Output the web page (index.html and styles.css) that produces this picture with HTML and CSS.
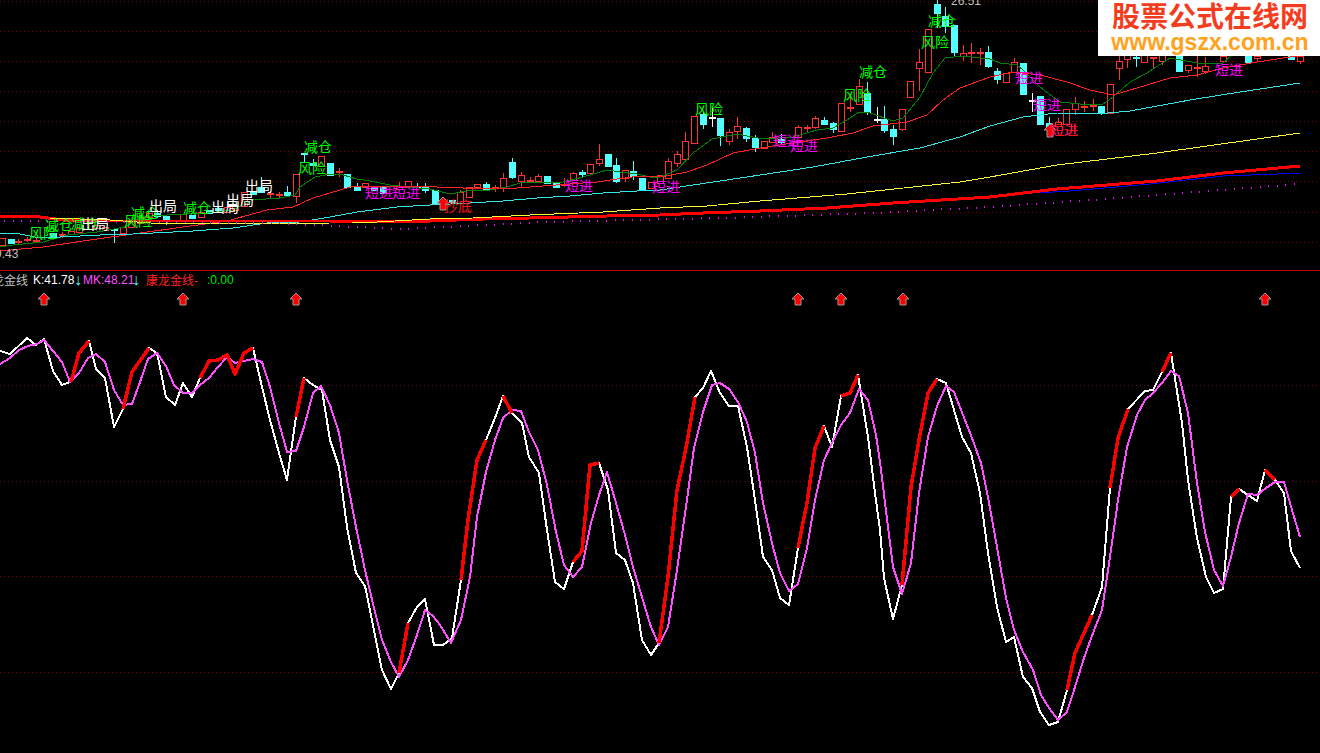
FILE: index.html
```html
<!DOCTYPE html>
<html lang="zh-CN">
<head>
    <meta charset="UTF-8">
    <title>股票公式在线网</title>
    <link rel="stylesheet" href="styles.css">
</head>
<body>
    <div class="terminal">
        <div class="main-panel">
            <svg class="chart" viewBox="0 0 1320 270" width="1320" height="270">
                <g id="main-grid"></g>
                <g id="candles"></g>
                <g id="main-lines"></g>

                <!-- signal arrows -->
                <polygon class="arrow" points="443,197 449,203 446,203 446,210 440,210 440,203 437,203"/>
                <polygon class="arrow" points="1050,124 1056,130 1053,130 1053,137 1047,137 1047,130 1044,130"/>

                <!-- signal labels -->
                <text class="label risk" x="29" y="238">风险</text>
                <text class="label risk" x="45" y="230">减仓</text>
                <text class="label risk" x="71" y="229">减仓</text>
                <text class="label exit" x="81" y="229">出局</text>
                <text class="label risk" x="124" y="226">风险</text>
                <text class="label risk" x="131" y="218">减仓</text>
                <text class="label exit" x="149" y="211">出局</text>
                <text class="label risk" x="183" y="213">减仓</text>
                <text class="label exit" x="211" y="212">出局</text>
                <text class="label exit" x="226" y="205">出局</text>
                <text class="label exit" x="245" y="191">出局</text>
                <text class="label risk" x="298" y="173">风险</text>
                <text class="label risk" x="304" y="152">减仓</text>
                <text class="label buy" x="365" y="198">短进</text>
                <text class="label buy" x="392" y="198">短进</text>
                <text class="label bottom" x="444" y="211">抄底</text>
                <text class="label buy" x="565" y="191">短进</text>
                <text class="label buy" x="652" y="192">短进</text>
                <text class="label risk" x="695" y="114">风险</text>
                <text class="label buy" x="773" y="146">短进</text>
                <text class="label buy" x="790" y="151">短进</text>
                <text class="label risk" x="843" y="100">风险</text>
                <text class="label risk" x="859" y="77">减仓</text>
                <text class="label risk" x="921" y="47">风险</text>
                <text class="label risk" x="928" y="26">减仓</text>
                <text class="label buy" x="1015" y="83">短进</text>
                <text class="label buy" x="1033" y="110">短进</text>
                <text class="label buy" x="1050" y="135">短进</text>
                <text class="label bottom" x="1050" y="135">短进</text>
                <text class="label buy" x="1215" y="75">短进</text>

                <text class="axis-value" x="-5" y="258">9.43</text>
                <text class="axis-value" x="951" y="5">26.51</text>
            </svg>
            <div class="logo">
                <div class="logo-title">股票公式在线网</div>
                <div class="logo-url">www.gszx.com.cn</div>
            </div>
        </div>

        <div class="sub-panel">
            <div class="legend">
                <span class="legend-name">龙金线</span>
                <span class="legend-k">K:41.78</span>
                <span class="legend-down">↓</span>
                <span class="legend-mk">MK:48.21</span>
                <span class="legend-down">↓</span>
                <span class="legend-gold">康龙金线-</span>
                <span class="legend-zero">:0.00</span>
            </div>
            <svg class="chart" viewBox="0 288 1320 465" width="1320" height="465">
                <g id="sub-grid"></g>
                <g id="sub-arrows"></g>
                <g id="sub-lines"></g>
            </svg>
        </div>
    </div>
    <script src="chart.js"></script>
</body>
</html>
```

FILE: styles.css
```css
body {
    margin: 0;
    background: #000;
    overflow: hidden;
    font-family: "Liberation Sans", "Noto Sans CJK SC", sans-serif;
}

.terminal {
    width: 1320px;
    height: 753px;
    display: flex;
    flex-direction: column;
}

.main-panel {
    position: relative;
    height: 270px;
    border-bottom: 1px solid #c80000;
}

.sub-panel {
    flex-grow: 1;
    display: flex;
    flex-direction: column;
    overflow: hidden;
}

.chart {
    display: block;
}

/* logo sits over the top right corner of the chart */
.logo {
    position: absolute;
    top: 0;
    right: 0;
    width: 220px;
    height: 56px;
    padding-left: 2px;
    background: #fff;
    display: flex;
    flex-direction: column;
    align-items: center;
}

.logo-title {
    font-family: "Noto Sans CJK SC", sans-serif;
    font-size: 28px;
    font-weight: 700;
    line-height: 31px;
    color: #f43d1e;
}

.logo-url {
    font-family: "Liberation Sans", sans-serif;
    font-size: 23px;
    font-weight: 700;
    line-height: 22px;
    color: #ffa21c;
}

.legend {
    height: 17px;
    display: flex;
    align-items: center;
    font-size: 12px;
    white-space: nowrap;
    margin-left: -8px;
}

.legend-name {
    color: #c0c0c0;
    width: 41px;
}

.legend-k {
    color: #fff;
    width: 42px;
}

.legend-down {
    color: #54ffff;
    font-size: 16px;
    line-height: 14px;
    width: 8px;
    margin-left: -1px;
    margin-right: 1px;
}

.legend-mk {
    color: #ff50ff;
    width: 50px;
}

.legend-gold {
    color: #ff2020;
    margin-left: 5px;
    width: 61px;
}

.legend-zero {
    color: #00e600;
}

/* svg parts */
.grid {
    stroke: #780000;
    stroke-width: 1;
    stroke-dasharray: 1 3;
}

.up {
    fill: #000;
    stroke: #ff3232;
    stroke-width: 1;
    shape-rendering: crispEdges;
}

.down {
    fill: #54ffff;
    stroke: #54ffff;
    stroke-width: 1;
    shape-rendering: crispEdges;
}

.doji {
    fill: #000;
    stroke: #fff;
    stroke-width: 1;
    shape-rendering: crispEdges;
}

.line {
    fill: none;
    shape-rendering: crispEdges;
    stroke-linejoin: round;
}

.ma5 { stroke: #008000; stroke-width: 1; }
.ma10 { stroke: #ff2020; stroke-width: 1; }
.ma20 { stroke: #33e6e6; stroke-width: 1; }
.ma60 { stroke: #ffff33; stroke-width: 1; }
.ma120 { stroke: #ff0000; stroke-width: 3; }
.ma250 { stroke: #0000ff; stroke-width: 1; }

.dot {
    fill: #ff00ff;
}

.k-line { stroke: #fff; stroke-width: 2; }
.mk-line { stroke: #ff50ff; stroke-width: 2; }
.gold-line { stroke: #ff0000; stroke-width: 3.5; }

.arrow {
    fill: #ff0000;
    stroke: #9a9a9a;
    stroke-width: 1;
}

.label {
    font-family: "Noto Sans CJK SC", sans-serif;
    font-size: 14px;
}

.risk { fill: #00ff00; }
.exit { fill: #fff; }
.buy { fill: #ff00ff; }
.bottom { fill: #ff1414; }

.axis-value {
    font-family: "Liberation Sans", sans-serif;
    font-size: 12px;
    fill: #c0c0c0;
}
```

FILE: chart.js
```js
const SVG_NS = 'http://www.w3.org/2000/svg';

function add(parent, tag, attrs) {
    const el = document.createElementNS(SVG_NS, tag);
    for (const key in attrs) el.setAttribute(key, attrs[key]);
    parent.appendChild(el);
    return el;
}

function drawGrid(id, rows, endX) {
    const group = document.getElementById(id);
    rows.forEach(y => add(group, 'line', { class: 'grid', x1: 0, x2: endX, y1: y + 0.5, y2: y + 0.5 }));
}

// candle: [x, bodyTop, bodyBottom, high, low]
const upCandles = [
    [2,238,245],[18,241,242,239,245],[27,239,240,237,242],[36,240,241,238,243],[62,234,235,232,238],
    [71,231,234],[79,228,232],[97,225,228],[105,227,230],[123,227,233],[131,222,227],[140,217,223],
    [149,213,217],[175,220,221],[183,214,220],[201,212,217],[227,207,212],[235,205,210],[244,192,206],
    [270,193,194,191,198],[279,194,195,192,199],[296,174,196,174,203],[321,156,166],[339,171,172,168,177],
    [365,183,187],[399,186,189,182,190],[408,181,187],[460,192,203,190,204],[469,187,197],[477,184,187],
    [495,187,188,185,192],[503,178,188,173,192],[521,175,181,172,187],[530,180,181,177,182],
    [538,176,181,174,183],[564,184,185,178,187],[573,173,180,172,181],[590,164,173],[599,159,163,144,166],
    [625,170,178,170,182],[651,182,188],[660,175,183],[668,161,178,158,179],[677,154,163,151,167],
    [685,141,159,132,159],[694,116,143],[729,132,141,129,145],[737,126,131,117,139],[764,141,148],
    [772,137,142,132,143],[798,127,137,125,138],[807,127,128,125,133],[815,118,127,116,129],[841,103,131],
    [850,107,108,94,112],[859,86,104,79,105],[902,109,129,109,131],[910,81,97],[919,62,68,49,91],[928,29,72],
    [963,53,56,45,61],[971,52,53,43,63],[980,52,53,48,65],[1006,73,82,73,83],[1014,62,72,58,72],
    [1058,122,126,118,127],[1066,109,124],[1075,103,109,97,115],[1084,106,107,101,112],[1093,105,106,99,111],
    [1110,84,113],[1119,61,68,56,80],[1127,55,59,55,68],[1144,55,62],[1153,57,58,57,68],[1162,55,61,55,65],
    [1188,65,70,65,73],[1197,67,68,56,77],[1205,66,71,57,74],[1223,56,61],[1257,56,58,56,62],[1300,55,61,55,64]
];

const downCandles = [
    [11,239,243],[53,233,237],[114,229,230,228,243],[157,213,216,210,218],[166,216,219,215,225],[192,215,218],
    [209,210,213],[218,208,210,207,213],[253,192,194],[261,187,192,177,193],[287,192,195,186,196],
    [304,153,154,153,163],[313,163,165,159,165],[330,163,175],[347,174,187],[357,187,190,183,191],
    [374,187,190],[383,187,193],[417,186,187,183,187],[425,187,190,183,193],[435,190,204],[452,200,202],
    [486,184,189,182,189],[512,162,177,158,179],[547,176,183],[556,183,187],[582,172,174,170,177],
    [608,154,166],[616,165,181,158,183],[633,171,176,161,180],[642,178,190],[703,114,124,112,129],
    [720,118,135,118,146],[746,128,138,127,142],[755,138,147,135,152],[781,139,142,134,145],
    [824,120,124,117,124],[833,123,129,122,133],[867,93,112,82,115],[884,119,130,106,133],
    [893,129,136,125,145],[937,4,13,0,28],[945,16,26,7,33],[954,25,52,25,57],[988,52,66,46,68],
    [997,71,79,68,84],[1023,63,94],[1040,96,124],[1049,123,127,117,127],[1101,106,113,106,115],
    [1136,57,58,55,67],[1179,55,71],[1248,55,62],[1291,55,59]
];

const dojis = [[712,117,118,108,127],[877,119,120,107,123],[1032,100,101,93,112]];

function drawCandles(list, className) {
    const group = document.getElementById('candles');
    list.forEach(([x, top, bottom, high = top, low = bottom]) => {
        if (high < top) add(group, 'line', { class: className, x1: x + 0.5, x2: x + 0.5, y1: high, y2: top });
        if (low > bottom) add(group, 'line', { class: className, x1: x + 0.5, x2: x + 0.5, y1: bottom, y2: low });
        add(group, 'rect', { class: className, x: x - 3 + 0.5, y: top + 0.5, width: 6, height: bottom - top });
    });
}

function drawLine(groupId, className, points) {
    add(document.getElementById(groupId), 'polyline', { class: 'line ' + className, points: points });
}

drawGrid('main-grid', [1, 31, 61, 91, 121, 151, 181, 212, 242], 1320);
drawGrid('sub-grid', [385, 481, 576, 672], 1320);

drawCandles(upCandles, 'up');
drawCandles(downCandles, 'down');
drawCandles(dojis, 'doji');

drawLine('main-lines', 'ma5', '0,247 13,245 43,242 68,235 97,232 125,227 140,217 167,215 207,213 233,210 253,200 280,198 295,195 300,187 315,177 330,174 343,175 357,179 370,181 390,185 407,187 430,189 450,194 467,191 490,190 507,187 520,183 543,182 563,182 583,177 607,170 620,172 637,174 650,177 660,177 677,170 693,153 712,139 737,134 763,139 793,137 817,130 833,128 847,120 859,112 870,113 893,121 903,118 920,97 933,73 945,58 963,56 990,59 1000,63 1017,65 1023,70 1040,87 1060,102 1080,104 1103,104 1113,97 1130,82 1147,73 1170,58 1197,63 1223,63 1232,55');
drawLine('main-lines', 'ma10', '0,251 43,247 90,240 133,234 183,227 227,221 267,210 293,207 313,198 330,193 350,187 370,186 397,186 437,187 463,188 487,189 517,188 543,186 570,184 597,182 617,179 640,176 660,177 687,172 707,165 733,153 760,148 793,143 827,138 853,133 873,126 907,122 927,115 943,100 960,88 990,77 1013,72 1040,75 1067,82 1090,90 1113,95 1137,88 1170,78 1197,75 1223,68 1257,62 1290,57 1303,56');
drawLine('main-lines', 'ma20', '0,233 15,233 40,238 100,235 133,234 193,231 233,228 267,223 300,222 330,217 357,212 397,207 430,205 470,203 503,201 537,198 570,196 603,193 637,191 660,190 693,185 747,177 813,167 867,157 920,148 960,137 990,126 1023,117 1057,113 1097,114 1130,111 1190,100 1240,92 1300,83');
drawLine('main-lines', 'ma250', '1037,193 1070,191 1150,184 1223,176 1277,174 1300,173');
drawLine('main-lines', 'ma120', '0,216 40,217 63,220 110,221 330,221 430,221 483,219 530,218 607,216 660,215 703,213 760,211 827,208 893,203 990,197 1057,189 1157,181 1223,173 1300,166');
drawLine('main-lines', 'ma60', '50,218 110,220 150,223 240,224 330,223 352,223 377,222 430,219 473,218 530,215 603,212 660,208 707,206 760,201 847,194 913,187 960,182 990,177 1057,165 1157,153 1250,140 1300,133');

// slow average is only plotted as sparse dots
const dotPath = [[0, 220], [270, 222], [400, 228], [547, 221], [720, 217], [873, 212], [990, 206], [1090, 199], [1300, 183]];
const mainLines = document.getElementById('main-lines');
for (let x = 4; x < 1302; x += 8.6) {
    const next = dotPath.findIndex(p => p[0] >= x);
    const a = dotPath[next - 1], b = dotPath[next];
    const y = a[1] + (b[1] - a[1]) * (x - a[0]) / (b[0] - a[0]);
    add(mainLines, 'rect', { class: 'dot', x: Math.round(x), y: Math.round(y), width: 1, height: 2 });
}

const arrowGroup = document.getElementById('sub-arrows');
[44, 183, 296, 798, 841, 903, 1265].forEach(x => {
    add(arrowGroup, 'polygon', {
        class: 'arrow',
        points: `${x},293 ${x + 6},299 ${x + 3},299 ${x + 3},305 ${x - 3},305 ${x - 3},299 ${x - 6},299`
    });
});

drawLine('sub-lines', 'k-line', '0,351 10,354 27,338 36,345 44,339 53,371 62,385 70,382 79,353 89,341 96,369 105,378 114,427 123,409 132,372 149,348 157,353 166,397 175,405 183,383 192,397 200,378 209,361 218,360 227,355 235,374 244,353 253,348 262,387 270,420 279,453 287,480 296,417 304,378 313,385 322,390 330,440 339,467 347,527 356,573 365,586 374,630 382,670 391,689 399,673 408,623 417,607 425,599 434,645 443,645 452,638 461,580 468,520 477,460 486,440 495,418 503,396 512,413 522,423 529,457 539,473 547,530 555,582 564,589 573,562 582,551 590,465 599,463 608,490 616,553 625,560 633,583 642,640 651,655 659,643 668,577 677,490 686,448 695,397 703,388 711,371 720,393 729,406 738,406 747,447 755,500 763,557 772,570 780,598 789,605 798,548 807,503 815,448 824,426 832,447 841,396 850,393 858,375 868,437 875,493 880,530 884,578 893,619 902,585 911,487 919,440 928,393 937,379 946,383 962,437 971,453 980,493 988,553 997,607 1006,642 1014,637 1023,677 1032,688 1040,712 1049,725 1058,722 1067,690 1075,653 1092,615 1102,587 1110,488 1118,438 1128,409 1145,391 1153,390 1162,372 1171,353 1182,423 1188,480 1197,538 1206,577 1214,593 1223,589 1231,497 1239,489 1248,495 1257,501 1265,470 1275,480 1284,493 1291,551 1300,568');
drawLine('sub-lines', 'mk-line', '0,364 10,358 19,350 28,346 37,344 44,340 53,351 62,362 70,382 79,373 88,358 96,354 105,362 114,390 123,405 132,404 140,382 148,359 157,353 166,366 174,385 183,393 192,393 200,385 209,378 218,367 227,357 235,363 244,361 253,359 262,362 270,387 279,423 287,452 296,451 304,427 313,393 321,386 330,405 339,433 347,480 356,527 365,570 374,608 382,640 391,662 399,677 408,660 417,635 425,610 433,616 440,625 451,643 461,620 470,577 477,517 486,472 495,440 503,418 512,410 521,411 529,432 538,450 547,485 556,532 564,565 573,577 582,567 591,523 599,495 607,472 616,503 625,535 633,567 642,597 651,627 659,645 668,627 677,570 686,507 694,448 703,412 712,385 720,383 729,389 738,402 747,422 755,453 763,503 772,543 780,573 789,591 798,584 807,548 815,500 824,460 832,443 841,425 850,413 859,389 868,400 876,435 880,462 893,567 902,594 911,563 919,493 928,437 937,406 946,386 954,392 963,415 972,438 981,463 988,497 997,547 1006,598 1014,630 1023,652 1033,670 1041,695 1049,708 1058,720 1067,712 1075,687 1084,658 1093,633 1102,610 1110,557 1118,500 1127,447 1137,415 1145,400 1153,393 1162,383 1171,371 1179,376 1188,413 1197,483 1205,532 1214,570 1223,586 1231,557 1239,523 1248,494 1257,495 1266,488 1275,482 1284,482 1292,510 1300,537');

// thick stretches of the K line
[
    '71,382 79,353 89,341',
    '123,409 132,372 149,348',
    '200,378 209,361 218,360 227,355 235,374 244,353 253,348',
    '296,417 304,378',
    '399,673 408,623',
    '461,580 468,520 477,460 486,440',
    '503,396 512,413',
    '573,562 582,551 590,465 599,463',
    '659,643 668,577 677,490 686,448 695,397',
    '798,548 807,503 815,448 824,426',
    '841,396 850,393 858,375',
    '902,585 911,487 919,440 928,393 937,379',
    '1067,690 1075,653 1092,615',
    '1110,488 1118,438 1128,409',
    '1162,372 1171,353',
    '1231,497 1239,489',
    '1265,470 1275,480'
].forEach(points => drawLine('sub-lines', 'gold-line', points));
```
